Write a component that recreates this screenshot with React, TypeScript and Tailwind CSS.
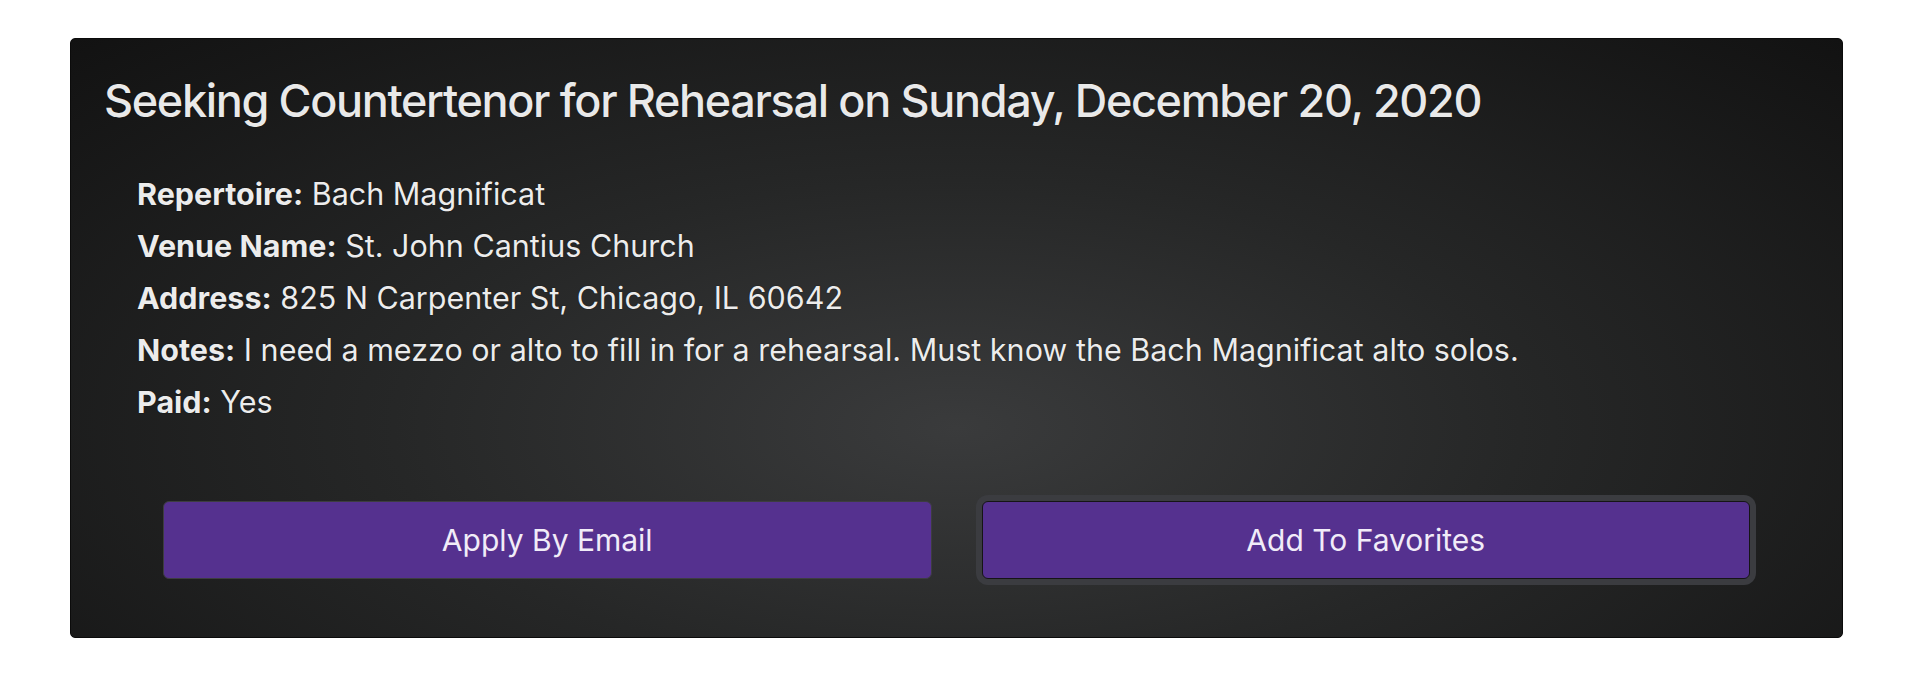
const details = [
  { label: 'Repertoire:', value: 'Bach Magnificat' },
  { label: 'Venue Name:', value: 'St. John Cantius Church' },
  { label: 'Address:', value: '825 N Carpenter St, Chicago, IL 60642' },
  { label: 'Notes:', value: 'I need a mezzo or alto to fill in for a rehearsal. Must know the Bach Magnificat alto solos.' },
  { label: 'Paid:', value: 'Yes' },
];

function GigCard() {
  return (
    <div className="ml-[70px] mt-[37px] h-[600px] w-[1773px] rounded-[5px] border border-[#0b0b0b] bg-[radial-gradient(ellipse_at_50%_65%,#3a3b3c_0%,#262727_45%,#121212_100%)] px-[33px] pt-[35px] text-[#ececec] [text-shadow:0_0_1px_#000]">
      <h2 className="text-[45px] leading-[54px] font-medium tracking-[-0.03em] text-[#e9e9e9]">
        Seeking Countertenor for Rehearsal on Sunday, December 20, 2020
      </h2>
      <div className="mt-[40px] pl-[33px]">
        {details.map((d) => (
          <p key={d.label} className="text-[30.5px] leading-[52px]">
            <span className="font-bold">{d.label}</span> {d.value}
          </p>
        ))}
      </div>
      <div className="mt-[73px] grid grid-cols-2 gap-[50px] px-[59px]">
        <button className="h-[78px] rounded-[6px] border border-[#3d3d40] bg-[#55318f] text-[30px] text-[#f1ecf8]">
          Apply By Email
        </button>
        <button className="h-[78px] rounded-[6px] border border-[#151515] bg-[#55318f] text-[30px] text-[#f1ecf8] ring-[6px] ring-[#3b3c40]">
          Add To Favorites
        </button>
      </div>
    </div>
  );
}

export default function App() {
  return (
    <div className="min-h-[678px] bg-white font-['Inter',sans-serif]">
      <div className="pt-px">
        <GigCard />
      </div>
    </div>
  );
}
